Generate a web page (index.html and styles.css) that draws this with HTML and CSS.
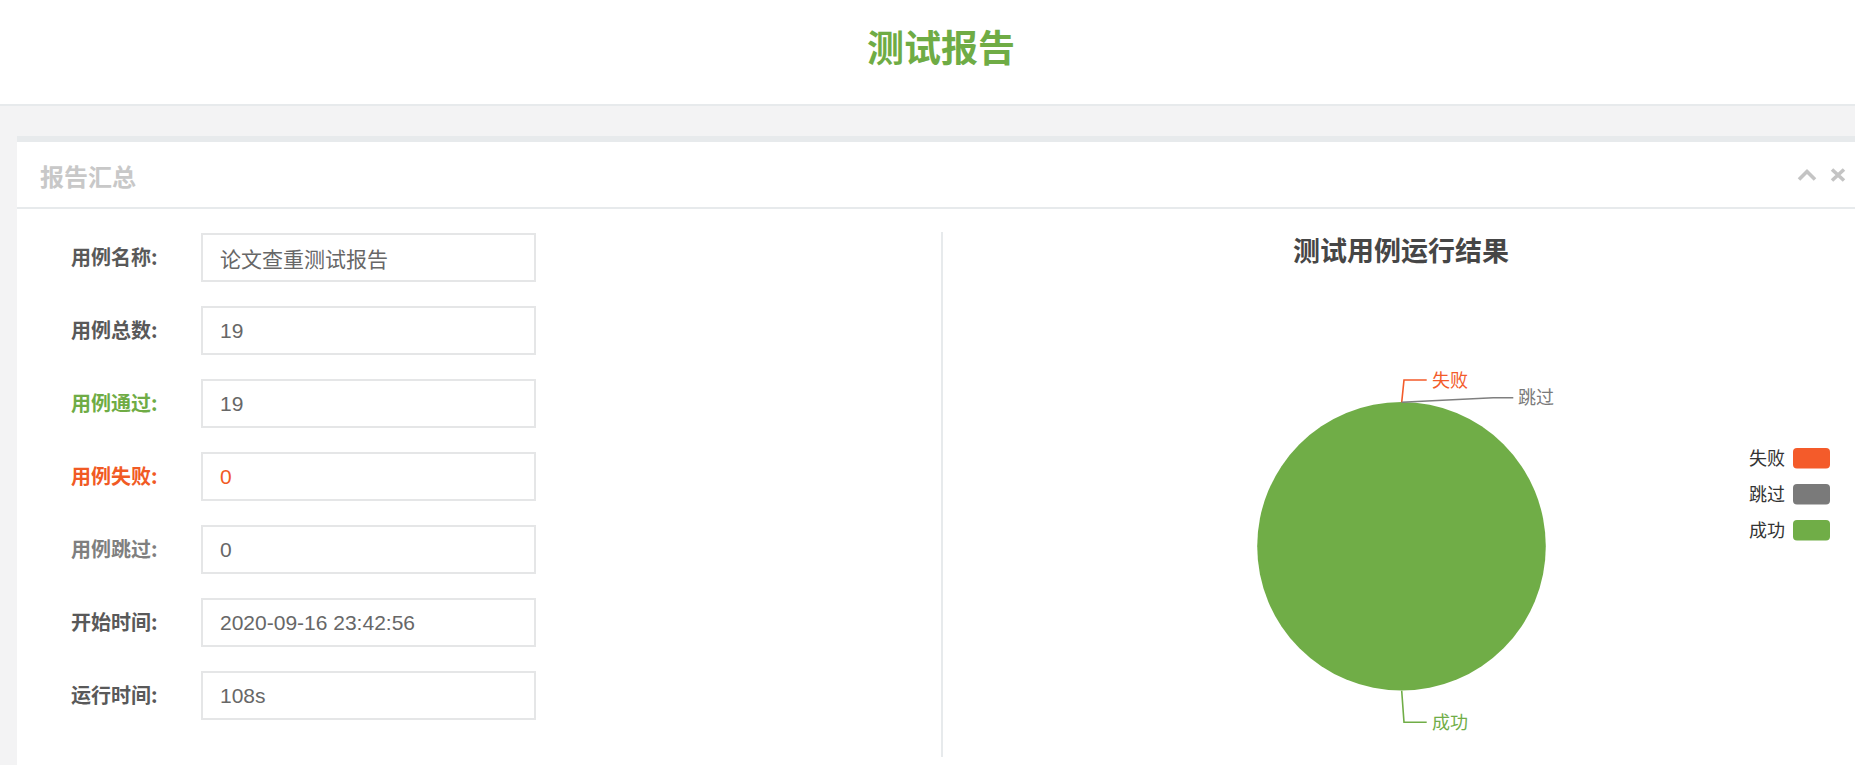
FILE: index.html
```html
<!DOCTYPE html>
<html lang="zh-CN">
<head>
<meta charset="utf-8">
<title>测试报告</title>
<link rel="stylesheet" href="styles.css">
</head>
<body>
<div class="page">
  <header class="top">
    <h1 class="top-title">测试报告</h1>
  </header>
  <section class="ibox">
    <div class="ibox-title">
      <h5 class="ibox-heading">报告汇总</h5>
      <div class="ibox-tools">
        <svg class="tool" width="20" height="14" viewBox="0 0 20 14"><path d="M2 11.5 L10 3.5 L18 11.5" fill="none" stroke="#c4c4c4" stroke-width="3.6"/></svg>
        <svg class="tool" width="16" height="14" viewBox="0 0 16 14"><path d="M2 1.5 L14 12.5 M14 1.5 L2 12.5" fill="none" stroke="#c4c4c4" stroke-width="3.6"/></svg>
      </div>
    </div>
    <div class="ibox-content">
      <div class="col-left">
        <div class="form">
          <div class="label">用例名称:</div>
          <div class="value">论文查重测试报告</div>
          <div class="label">用例总数:</div>
          <div class="value">19</div>
          <div class="label label-pass">用例通过:</div>
          <div class="value">19</div>
          <div class="label label-fail">用例失败:</div>
          <div class="value value-fail">0</div>
          <div class="label label-skip">用例跳过:</div>
          <div class="value">0</div>
          <div class="label">开始时间:</div>
          <div class="value">2020-09-16 23:42:56</div>
          <div class="label">运行时间:</div>
          <div class="value">108s</div>
        </div>
      </div>
      <div class="col-right">
        <svg class="chart" width="923" height="525" viewBox="0 0 923 525">
          <text class="chart-title" x="458" y="28.5" text-anchor="middle">测试用例运行结果</text>
          <circle cx="458.5" cy="314.3" r="144.3" fill="#70ad47"/>
          <polyline points="458.7,170.3 461,148 483.7,148" fill="none" stroke="#f35b2a" stroke-width="1.6"/>
          <text class="pie-label" x="489" y="154.7" fill="#f35b2a">失败</text>
          <polyline points="458.7,170.3 550.3,165.7 570.3,165.7" fill="none" stroke="#7f7f7f" stroke-width="1.6"/>
          <text class="pie-label" x="575" y="172.4" fill="#7a7a7a">跳过</text>
          <polyline points="458.7,458.7 461,490.3 483.7,490.3" fill="none" stroke="#70ad47" stroke-width="1.6"/>
          <text class="pie-label" x="489" y="497" fill="#70ad47">成功</text>
          <text class="legend-text" x="842" y="232.7" text-anchor="end">失败</text>
          <rect x="850" y="216" width="37" height="20.5" rx="4" fill="#f45b2a"/>
          <text class="legend-text" x="842" y="268.7" text-anchor="end">跳过</text>
          <rect x="850" y="252" width="37" height="20.5" rx="4" fill="#7a7a7a"/>
          <text class="legend-text" x="842" y="304.7" text-anchor="end">成功</text>
          <rect x="850" y="288" width="37" height="20.5" rx="4" fill="#70ad47"/>
        </svg>
      </div>
    </div>
  </section>
</div>
</body>
</html>
```
FILE: styles.css
```css
html, body {
  margin: 0;
  padding: 0;
  overflow: hidden;
  background: #f3f3f4;
}

body {
  font-family: "Liberation Sans", "Noto Sans CJK SC", sans-serif;
  color: #676a6c;
}

.page {
  width: 1882px;
  min-height: 765px;
  background: #f3f3f4;
}

.top {
  height: 104px;
  background: #ffffff;
  border-bottom: 2px solid #e7eaec;
  box-sizing: content-box;
}

.top-title {
  margin: 0;
  padding-top: 28px;
  font-size: 37px;
  line-height: 37px;
  font-weight: bold;
  text-align: center;
  color: #6fac45;
  font-family: "Noto Sans CJK SC", sans-serif;
}

.ibox {
  margin: 30px 16px 0 17px;
  background: #ffffff;
  border-top: 6px solid #e7eaec;
}

.ibox-title {
  height: 65px;
  border-bottom: 2px solid #e7eaec;
  display: flex;
  align-items: center;
  justify-content: space-between;
  padding: 0 20px 0 23px;
}

.ibox-heading {
  margin: 0;
  padding-top: 2px;
  font-size: 24px;
  font-weight: bold;
  color: #c8c8c8;
  font-family: "Noto Sans CJK SC", sans-serif;
}

.ibox-tools {
  display: flex;
  align-items: center;
  gap: 13px;
  padding-top: 1px;
}

.tool {
  display: block;
}

.ibox-content {
  display: flex;
  padding: 23px 0 20px 0;
}

.col-left {
  width: 924px;
  flex: none;
}

.col-right {
  flex: 1;
  height: 525px;
  border-left: 2px solid #e7eaec;
}

.form {
  display: grid;
  grid-template-columns: 130px 335px;
  grid-auto-rows: 49px;
  row-gap: 24px;
  padding: 1px 0 0 54px;
}

.label {
  align-self: center;
  font-size: 20px;
  font-weight: bold;
  color: #595959;
  font-family: "Noto Sans CJK SC", sans-serif;
  padding-bottom: 2px;
}

.label-pass { color: #6fac45; }
.label-fail { color: #f15a24; }
.label-skip { color: #7f7f7f; }

.value {
  box-sizing: border-box;
  border: 2px solid #e5e6e7;
  padding-left: 17px;
  display: flex;
  align-items: center;
  font-size: 21px;
  color: #676767;
}

.value-fail { color: #f15a24; }

.chart {
  display: block;
  font-family: "Liberation Sans", "Noto Sans CJK SC", sans-serif;
}

.chart-title {
  font-size: 27px;
  font-weight: bold;
  fill: #464646;
}

.pie-label {
  font-size: 18px;
}

.legend-text {
  font-size: 18px;
  fill: #333333;
}
```
